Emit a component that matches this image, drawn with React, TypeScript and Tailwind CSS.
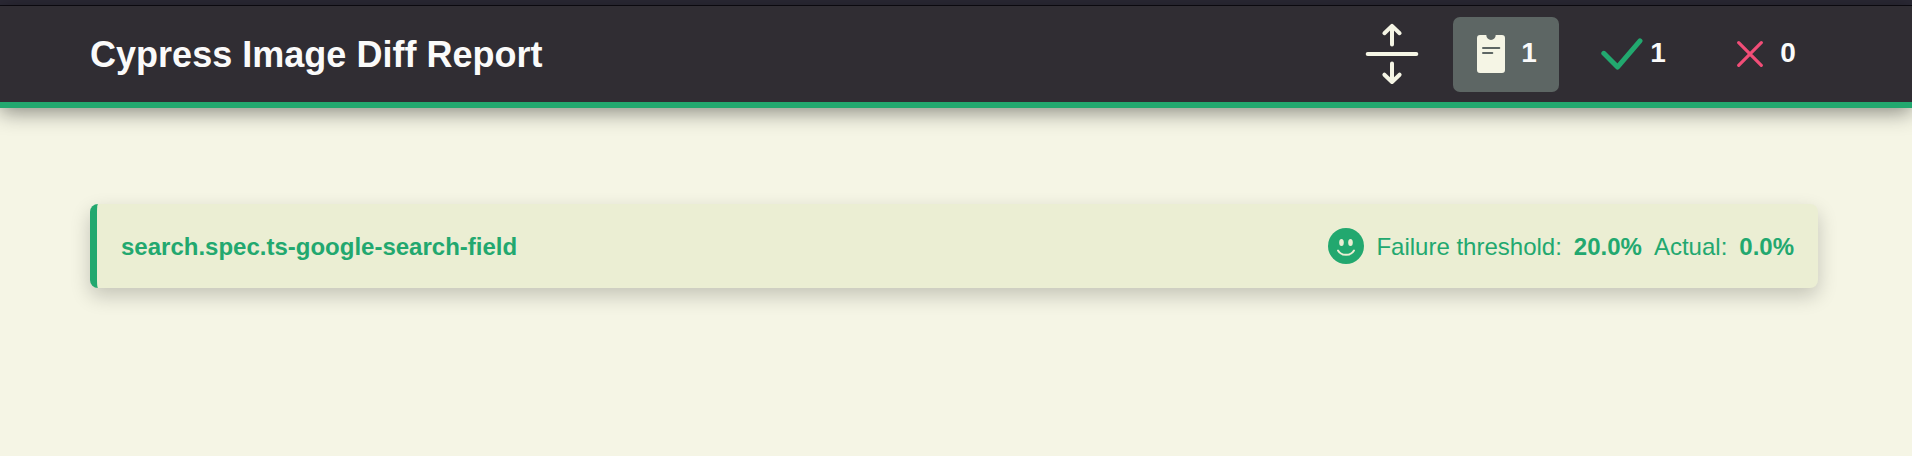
import React from 'react';

function SplitIcon() {
  return (
    <svg width="54" height="64" viewBox="0 0 54 64" fill="none" stroke="#f5f5e5" strokeWidth="4" strokeLinecap="round" strokeLinejoin="round">
      <path d="M2.7 32H51.3" />
      <path d="M27 22.5V5M19.4 11.2L27 3.9L34.6 11.2" />
      <path d="M27 41.5V59M19.4 52.7L27 60L34.6 52.7" />
    </svg>
  );
}

function ClipboardIcon() {
  return (
    <svg width="28" height="38" viewBox="0 0 28 38">
      <path fill="#f5f5e5" d="M3 0H9.3A4.7 4.9 0 0 0 18.7 0H25A3 3 0 0 1 28 3V35A3 3 0 0 1 25 38H3A3 3 0 0 1 0 35V3A3 3 0 0 1 3 0Z" />
      <path stroke="#5d6664" strokeWidth="2" strokeLinecap="round" d="M6 13H22.3M6 18H15.3" />
    </svg>
  );
}

function CheckIcon() {
  return (
    <svg width="42" height="32" viewBox="0 0 42 32" fill="none" stroke="#22a86f" strokeWidth="5" strokeLinecap="round" strokeLinejoin="round">
      <path d="M2.8 15.3L16.5 29.1L39 2.8" />
    </svg>
  );
}

function CrossIcon() {
  return (
    <svg width="26" height="26" viewBox="0 0 26 26" fill="none" stroke="#f14d77" strokeWidth="3.2" strokeLinecap="round">
      <path d="M1.7 1.7L24.3 24.3M24.3 1.7L1.7 24.3" />
    </svg>
  );
}

function SmileIcon() {
  return (
    <svg width="36" height="36" viewBox="0 0 36 36">
      <circle cx="18" cy="18" r="18" fill="#22a86f" />
      <ellipse cx="13.5" cy="14.5" rx="2.3" ry="3.6" fill="#ebeed3" />
      <ellipse cx="22.5" cy="14.5" rx="2.3" ry="3.6" fill="#ebeed3" />
      <path d="M10 22.5C13.5 28.3 22.5 28.3 26 22.5" fill="none" stroke="#ebeed3" strokeWidth="2" strokeLinecap="round" />
    </svg>
  );
}

export default function App() {
  return (
    <div className="min-h-screen bg-[#f5f5e5] font-['Liberation_Sans',Arial,sans-serif]">
      <div className="h-[6px] border-b border-[#0d0b12] bg-[#2b2935]" />
      <header className="flex h-[102px] items-center justify-between border-b-6 border-[#22a86f] bg-[#302d33] pr-[116px] pl-[90px] shadow-[0_4px_20px_rgba(0,0,0,0.45)]">
        <h1 className="pt-[2px] text-[36px] leading-none font-bold tracking-[0.02px] text-[#fafafa]">Cypress Image Diff Report</h1>
        <div className="flex items-center pt-px text-[28px] leading-none font-bold text-[#fafafa]">
          <button className="mr-[34px] pb-px"><SplitIcon /></button>
          <button className="flex h-[75px] w-[106px] items-center gap-[16px] rounded-[7px] bg-[#5d6664] pb-px pl-[24px]">
            <ClipboardIcon />
            <span className="w-4 pb-[2px]">1</span>
          </button>
          <button className="ml-[42px] flex items-center gap-[7px] pb-px">
            <CheckIcon />
            <span className="w-4 pb-[2px]">1</span>
          </button>
          <button className="ml-[71px] flex items-center gap-[17px] pb-px">
            <CrossIcon />
            <span className="w-4 pb-[2px]">0</span>
          </button>
        </div>
      </header>
      <main className="px-[90px] pt-[96px]">
        <section className="flex h-[84px] w-[1728px] items-center justify-between rounded-lg border-l-7 border-[#22a86f] bg-[#ebeed3] px-6 text-2xl text-[#22a86f] shadow-[0_8px_20px_rgba(0,0,0,0.2)]">
          <h2 className="pt-[2px] font-bold">search.spec.ts-google-search-field</h2>
          <div className="flex items-center">
            <SmileIcon />
            <p className="flex gap-3 pt-[2px] pl-3">
              <span>Failure threshold:</span>
              <b>20.0%</b>
              <span>Actual:</span>
              <b>0.0%</b>
            </p>
          </div>
        </section>
      </main>
    </div>
  );
}
